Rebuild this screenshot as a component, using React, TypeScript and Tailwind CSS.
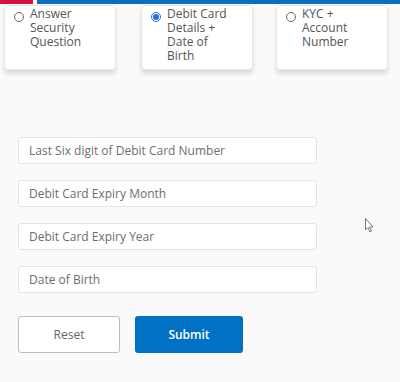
import React from "react";

const font = { fontFamily: '"Open Sans", "Noto Sans", sans-serif' };

function Option({ label, checked, left }: { label: string[]; checked?: boolean; left: string }) {
  return (
    <div className={`${left} h-[65px] w-[112px] rounded-sm border border-[#e6e6e6] bg-white shadow-[0_4px_4px_rgba(0,0,0,0.12)]`}>
      <div className="flex gap-[6px] pl-[9px] pt-[1px]">
        <span className={`mt-[5px] flex h-[10px] w-[10px] shrink-0 items-center justify-center rounded-full border ${checked ? "border-[#1a73e8]" : "border-[#666]"}`}>
          {checked && <span className="h-[6px] w-[6px] rounded-full bg-[#1a73e8]" />}
        </span>
        <div className="text-[12px] leading-[14px] text-[#555]">
          {label.map((l) => <div key={l}>{l}</div>)}
        </div>
      </div>
    </div>
  );
}

export default function App() {
  const fields = ["Last Six digit of Debit Card Number", "Debit Card Expiry Month", "Debit Card Expiry Year", "Date of Birth"];
  return (
    <div className="relative h-[382px] w-[400px] overflow-hidden bg-[#fafafa]" style={font}>
      <div className="flex h-[4px]">
        <div className="w-[33px] bg-[#d4123f]" />
        <div className="w-[4px]" />
        <div className="flex-1 bg-[#0b6fc0]" />
      </div>
      <div className="mt-[1px] flex">
        <Option left="ml-[4px]" label={["Answer", "Security", "Question"]} />
        <Option left="ml-[25px]" checked label={["Debit Card", "Details +", "Date of", "Birth"]} />
        <Option left="ml-[23px]" label={["KYC +", "Account", "Number"]} />
      </div>
      <div className="mt-[67px] flex flex-col gap-[16px] pl-[18px]">
        {fields.map((f) => (
          <div key={f} className="flex h-[27px] w-[299px] items-center rounded-[3px] border border-[#e3e3e3] bg-white pl-[10px] text-[12px] text-[#6e6e6e]">
            {f}
          </div>
        ))}
      </div>
      <div className="mt-[23px] flex gap-[15px] pl-[18px]">
        <button className="h-[37px] w-[102px] rounded-[3px] border border-[#bdbdbd] bg-white text-[12px] text-[#666]">Reset</button>
        <button className="h-[37px] w-[108px] rounded-[3px] bg-[#0071c5] text-[12px] font-semibold text-white">Submit</button>
      </div>
      <svg className="absolute left-[365px] top-[218px]" width="9" height="15" viewBox="0 0 9 15">
        <path d="M0.5 0.5 L0.5 12 L3 9.5 L5 14 L6.5 13.3 L4.6 9 L8 9 Z" fill="white" stroke="#555" strokeWidth="0.8" />
      </svg>
    </div>
  );
}
